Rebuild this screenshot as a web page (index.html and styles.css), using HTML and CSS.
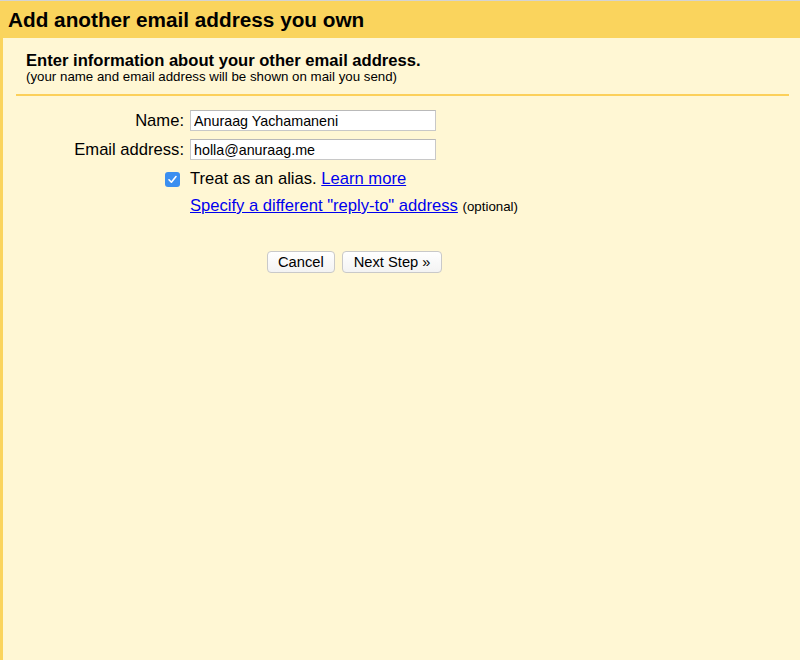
FILE: index.html
```html
<!DOCTYPE html>
<html lang="en">
<head>
    <meta charset="UTF-8">
    <title>Add another email address you own</title>
    <link rel="stylesheet" href="styles.css">
</head>
<body>

    <div class="page">
        <h1 class="title">Add another email address you own</h1>

        <div class="panel">
            <div class="intro">
                <h2>Enter information about your other email address.</h2>
                <p>(your name and email address will be shown on mail you send)</p>
            </div>

            <div class="form">
                <div class="row">
                    <label for="name">Name:</label>
                    <input type="text" id="name" value="Anuraag Yachamaneni">
                </div>
                <div class="row">
                    <label for="email">Email address:</label>
                    <input type="text" id="email" value="holla@anuraag.me">
                </div>
                <div class="row check-row">
                    <span class="check">
                        <svg width="15" height="15" viewBox="0 0 15 15">
                            <rect x="0" y="0" width="15" height="15" rx="3" fill="#3b8ff0"/>
                            <path d="M4 7.8 L6.4 10.2 L11 4.6" fill="none" stroke="#fff" stroke-width="1.6" stroke-linecap="round" stroke-linejoin="round"/>
                        </svg>
                    </span>
                    <span class="alias">Treat as an alias. <a href="#">Learn more</a></span>
                </div>
                <div class="row reply-row">
                    <span class="spacer"></span>
                    <span><a href="#">Specify a different "reply-to" address</a> <small>(optional)</small></span>
                </div>
            </div>

            <div class="actions">
                <button>Cancel</button>
                <button class="next">Next Step &raquo;</button>
            </div>
        </div>
    </div>

</body>
</html>
```

FILE: styles.css
```css
body {
    margin: 0;
    font-family: Arial, "Liberation Sans", sans-serif;
    background-color: #fff7d4;
    color: #000;
}

.page {
    border-top: 1px solid #d3d3d3;
    min-height: 659px;
    background-color: #fad45d;
}

.title {
    margin: 0;
    padding: 7px 8px 0;
    height: 30px;
    font-size: 20.75px;
    font-weight: bold;
    line-height: 24px;
}

.panel {
    margin-left: 3px;
    min-height: 621px;
    background-color: #fff7d4;
    padding: 13px 11px 0 13px;
}

.intro {
    padding: 0 0 10px 10px;
    border-bottom: 2px solid #fcd05a;
}

.intro h2 {
    margin: 0;
    font-size: 16.6px;
    line-height: 19px;
}

.intro p {
    margin: 0;
    font-size: 13.3px;
    line-height: 14px;
}

.form {
    margin-top: 14px;
}

.row {
    display: flex;
    align-items: center;
    margin-bottom: 8px;
    font-size: 16.6px;
}

.row label,
.spacer {
    width: 168px;
    text-align: right;
    padding-right: 6px;
    flex-shrink: 0;
}

.row input {
    width: 238px;
    height: 15px;
    padding: 2px 3px;
    border: 1px solid #c8c8c8;
    border-top-color: #b9b9b9;
    font-family: Arial, "Liberation Sans", sans-serif;
    font-size: 14.3px;
    background: #fff;
}

.check {
    display: flex;
    justify-content: flex-end;
    width: 164px;
    padding-right: 10px;
    flex-shrink: 0;
}

.check svg {
    display: block;
}

.check-row {
    margin-top: 9px;
    margin-bottom: 7px;
}

a {
    color: #0000ee;
}

small {
    font-size: 13.3px;
}

.actions {
    display: flex;
    gap: 7px;
    margin-top: 35px;
    padding-left: 251px;
}

button {
    font-family: Arial, "Liberation Sans", sans-serif;
    font-size: 14.7px;
    height: 22px;
    padding: 0 10px;
    background: linear-gradient(#ffffff, #f3f3f3);
    border: 1px solid #c9c9c9;
    border-radius: 4px;
    color: #000;
}

.next {
    padding: 0 11px;
}
```
